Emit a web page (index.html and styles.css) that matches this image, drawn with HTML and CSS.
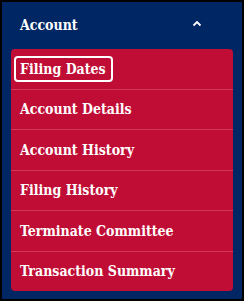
FILE: index.html
```html
<!DOCTYPE html>
<html lang="en">
  <head>
    <meta charset="UTF-8" />
    <meta name="viewport" content="width=device-width, initial-scale=1.0" />
    <title>Account</title>
    <link rel="stylesheet" href="styles.css">
  </head>
  <body>
    <div class="frame">
      <div class="head">
        <h2 class="title">Account</h2>
        <svg class="chev" width="10" height="7" viewBox="0 0 10 7">
          <path d="M1.5 5.5 L5 2 L8.5 5.5" fill="none" stroke="#ffffff" stroke-width="1.8" />
        </svg>
      </div>
      <ul class="menu">
        <li class="item"><a class="link focus" href="#">Filing Dates</a></li>
        <li class="item"><a class="link" href="#">Account Details</a></li>
        <li class="item"><a class="link" href="#">Account History</a></li>
        <li class="item"><a class="link" href="#">Filing History</a></li>
        <li class="item"><a class="link" href="#">Terminate Committee</a></li>
        <li class="item"><a class="link" href="#">Transaction Summary</a></li>
      </ul>
    </div>
  </body>
</html>
```

FILE: styles.css
```css
* {
  margin: 0;
  padding: 0;
  box-sizing: border-box;
}
body {
  font-family: "DejaVu Serif", serif;
  font-stretch: condensed;
  background-color: #000000;
}

.frame {
  width: 244px;
  height: 301px;
  border: 2px solid #000000;
  background-color: #002664;
}

.head {
  height: 47px;
  display: flex;
  align-items: center;
  justify-content: space-between;
  padding: 0 40px 2px 18px;
}
.title {
  color: #ffffff;
  font-size: 14px;
  font-weight: 700;
}
.chev {
  display: block;
  margin-top: -2px;
}

.menu {
  list-style: none;
  margin: 0 9px;
  background-color: #bf0d35;
  border-radius: 4px;
  overflow: hidden;
}
.item {
  height: 39.5px;
  display: flex;
  align-items: center;
  padding-left: 9px;
}
.item + .item {
  height: 40.5px;
  border-top: 1px solid #d13858;
}
.link {
  color: #ffffff;
  text-decoration: none;
  font-size: 14px;
  font-weight: 700;
}
.focus {
  border: 2px solid #ffffff;
  border-radius: 4px;
  padding: 3px 5px 3px 4px;
  margin-left: -6px;
}
```
